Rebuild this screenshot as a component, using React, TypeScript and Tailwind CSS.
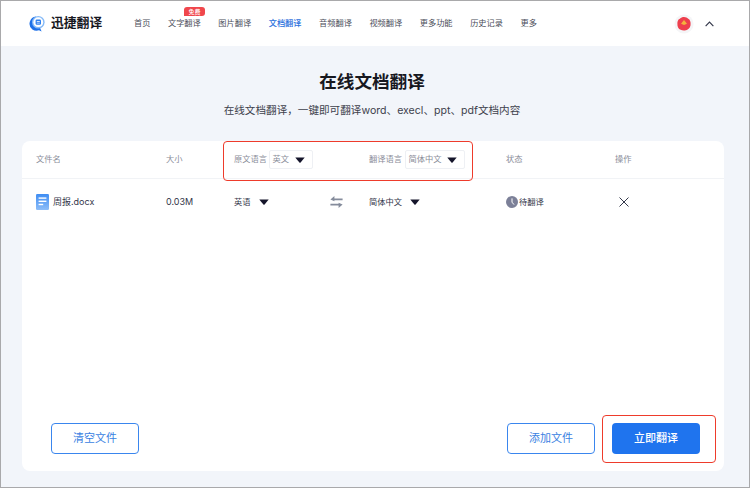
const font = { fontFamily: '"Inter","Noto Sans CJK SC",sans-serif' };

const NAV = ["首页", "文字翻译", "图片翻译", "文档翻译", "音频翻译", "视频翻译", "更多功能", "历史记录", "更多"];

function Caret({ className = "" }: { className?: string }) {
  return (
    <svg viewBox="0 0 10 6" className={`w-[10px] h-[6px] shrink-0 ${className}`}>
      <path d="M0.3 0.4H9.7L5.6 5.4Q5 6 4.4 5.4Z" fill="#15152b" />
    </svg>
  );
}

function Logo() {
  return (
    <svg viewBox="0 0 16 17" className="w-[16px] h-[17px] shrink-0">
      <path d="M7 1.5A7.2 7.2 0 0 0 3.4 14.4C5.4 15.8 8 16 10 15.2L12.6 16.6L11.2 13.2Z" fill="#1c6fe8" />
      <circle cx="9.3" cy="7.2" r="6.3" fill="#85baf8" />
      <circle cx="9.3" cy="7.2" r="4.9" fill="#fff" />
      <rect x="6.6" y="4.6" width="5.4" height="5.2" rx="1.2" fill="#2f80ef" />
      <rect x="7.8" y="6.2" width="3" height="0.9" fill="#fff" />
      <rect x="7.8" y="7.8" width="3" height="0.7" fill="#cfe2fb" />
    </svg>
  );
}

function Avatar() {
  return (
    <svg viewBox="0 0 20 20" className="w-[20px] h-[20px] shrink-0">
      <circle cx="10" cy="10" r="9.6" fill="#f5f5f7" />
      <path d="M10 3C12 3 13 3.8 14.2 4.8C16 5.6 16.8 8 16.6 10C16.8 12 15.6 14.6 13.6 15.4C12 16.8 8.4 16.8 6.6 15.8C4.4 15 3.2 12.4 3.4 10C3.2 8 3.8 5.6 5.8 4.8C7 3.6 8.4 3 10 3Z" fill="#ee3f4d" />
      <path d="M10 6L13 9.8L10 11L7 9.8Z" fill="#f3b23c" />
    </svg>
  );
}

function DocIcon() {
  return (
    <svg viewBox="0 0 13 16" className="w-[13px] h-[16px] shrink-0">
      <defs>
        <linearGradient id="doc" x1="0" y1="0" x2="0" y2="1">
          <stop offset="0" stopColor="#3f8df3" />
          <stop offset="1" stopColor="#8dbdf8" />
        </linearGradient>
      </defs>
      <rect width="13" height="16" rx="1.2" fill="url(#doc)" />
      <rect x="2.6" y="3.4" width="7.8" height="1.4" fill="#fff" />
      <rect x="2.6" y="6.6" width="7.8" height="1.4" fill="#fff" />
      <rect x="2.6" y="9.8" width="4.6" height="1.4" fill="#fff" />
    </svg>
  );
}

function Swap() {
  return (
    <svg viewBox="0 0 13 12" className="w-[13px] h-[12px] shrink-0" fill="#858c9c">
      <path d="M4.4 0L0.4 3.4L4.4 5.2V4.2H12.6V2.6H4.4Z" />
      <path d="M8.6 12L12.6 8.6L8.6 6.8V7.8H0.4V9.4H8.6Z" />
    </svg>
  );
}

function Clock() {
  return (
    <svg viewBox="0 0 12 12" className="w-[12px] h-[12px] shrink-0">
      <circle cx="6" cy="6" r="6" fill="#7c8098" />
      <path d="M6 2.4V6.2L8 8.6" stroke="#fff" strokeWidth="1" fill="none" />
    </svg>
  );
}

function Close() {
  return (
    <svg viewBox="0 0 10 10" className="w-[10px] h-[10px] shrink-0" fill="none" stroke="#34384a" strokeWidth="1">
      <path d="M0.5 0.5L9.5 9.5M9.5 0.5L0.5 9.5" />
    </svg>
  );
}

function Chevron() {
  return (
    <svg viewBox="0 0 10 6" className="w-[9px] h-[6px] shrink-0" fill="none" stroke="#33374a" strokeWidth="1.3">
      <path d="M0.7 5.3L5 1L9.3 5.3" />
    </svg>
  );
}

function Select({ label, width }: { label: string; width: string }) {
  return (
    <div className={`${width} h-[19px] pl-[3px] pr-[7px] flex items-center justify-between border border-[#eef0f4] rounded-[2px] bg-white text-[8.25px] text-[#8a8d99]`}>
      <span>{label}</span>
      <Caret />
    </div>
  );
}

export default function App() {
  return (
    <div style={font} className="relative w-[750px] h-[488px] border border-[#a9a9ab] bg-[#f2f5fa] flex flex-col overflow-hidden">
      <header className="h-[45px] shrink-0 bg-white flex items-center pl-[28px]">
        <Logo />
        <span className="ml-[6px] w-[52px] text-[12.8px] leading-none font-bold text-[#17181f] whitespace-nowrap">迅捷翻译</span>
        <nav className="ml-[31px] flex items-center gap-[17.6px] text-[8.2px] text-[#4b4e5a]">
          {NAV.map((n) => (
            <span key={n} className={`relative whitespace-nowrap ${n === "文档翻译" ? "text-[#2a6fdc] font-medium" : ""}`}>
              {n}
              {n === "文字翻译" && (
                <span className="absolute -top-[10px] left-[16px] w-[21px] h-[9px] rounded-t-[3px] rounded-br-[3px] bg-[#f0474c] text-white text-[6px] leading-[9px] text-center font-medium">免费</span>
              )}
            </span>
          ))}
        </nav>
        <div className="ml-auto mr-[35px] flex items-center gap-[11px]">
          <Avatar />
          <Chevron />
        </div>
      </header>

      <main className="flex-1 flex flex-col items-center min-h-0 pr-[6px]">
        <h1 className="mt-[24px] text-[17.6px] leading-[24px] font-bold text-[#17181f]">在线文档翻译</h1>
        <p className="mt-[9px] text-[10.6px] leading-[16px] text-[#3e414c]">在线文档翻译，一键即可翻译word、execl、ppt、pdf文档内容</p>

        <section className="relative mt-[22px] ml-[2px] w-[702px] h-[330px] bg-white rounded-[8px] flex flex-col">
          <div className="h-[38px] shrink-0 flex items-center border-b border-[#f1f3f6] pl-[14px] text-[8.25px] text-[#8a8d99]">
            <span className="w-[130px]">文件名</span>
            <span className="w-[68px]">大小</span>
            <div className="w-[135px] flex items-center gap-[1.5px]">
              <span className="whitespace-nowrap">原文语言</span>
              <Select label="英文" width="w-[44px]" />
            </div>
            <div className="w-[137px] flex items-center gap-[2.5px]">
              <span className="whitespace-nowrap">翻译语言</span>
              <Select label="简体中文" width="w-[60px]" />
            </div>
            <span className="w-[109px]">状态</span>
            <span>操作</span>
          </div>

          <div className="h-[46px] shrink-0 flex items-center pl-[14px] text-[8.5px] text-[#33364a]">
            <div className="w-[130px] flex items-center gap-[4px]">
              <DocIcon />
              <span className="text-[9px]">周报.docx</span>
            </div>
            <span className="w-[68px] text-[9px]">0.03M</span>
            <div className="w-[96px] flex items-center gap-[8px]">
              <span className="text-[8.25px]">英语</span>
              <Caret />
            </div>
            <div className="w-[39px]">
              <Swap />
            </div>
            <div className="w-[137px] flex items-center gap-[8px]">
              <span className="text-[8.25px]">简体中文</span>
              <Caret />
            </div>
            <div className="w-[113px] flex items-center gap-[1px]">
              <Clock />
              <span className="text-[8.25px]">待翻译</span>
            </div>
            <Close />
          </div>

          <div className="mt-auto mb-[17px] flex items-center pl-[29px] pr-[24px] text-[11px]">
            <button className="w-[88px] h-[31px] rounded-[4px] border border-[#3a86ee] bg-white text-[#3a7fe2]">清空文件</button>
            <button className="ml-auto w-[88px] h-[31px] rounded-[4px] border border-[#3a86ee] bg-white text-[#3a7fe2]">添加文件</button>
            <button className="ml-[17px] w-[88px] h-[31px] rounded-[4px] bg-[#1f74ee] text-white font-medium">立即翻译</button>
          </div>

          <div className="absolute left-[201px] top-0 w-[250px] h-[40px] border border-[#ee3b2b] rounded-[4px]" />
          <div className="absolute left-[580px] top-[274px] w-[114px] h-[48px] border border-[#ee3b2b] rounded-[4px]" />
        </section>
      </main>
    </div>
  );
}
